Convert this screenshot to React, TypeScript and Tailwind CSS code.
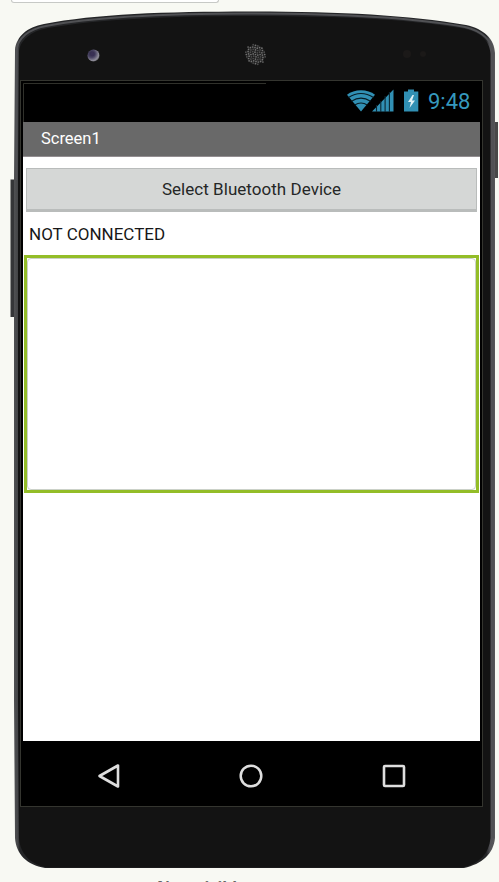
const speakerDots = Array.from({ length: 81 }, (_, i) => ({ x: (i % 9) - 4, y: Math.floor(i / 9) - 4 }))
  .filter(({ x, y }) => x * x + y * y < 20);

function PhoneShell() {
  return (
    <svg className="absolute left-0 top-0" width="499" height="882" viewBox="0 0 499 882" aria-hidden="true">
      <defs>
        <linearGradient id="edge" x1="14" x2="496" y1="0" y2="0" gradientUnits="userSpaceOnUse">
          <stop offset="0" stopColor="#505153" />
          <stop offset=".008" stopColor="#444547" />
          <stop offset=".012" stopColor="#242527" />
          <stop offset=".98" stopColor="#242527" />
          <stop offset=".987" stopColor="#505054" />
          <stop offset="1" stopColor="#58585a" />
        </linearGradient>
        <radialGradient id="lens" cx=".35" cy=".35" r=".8">
          <stop offset="0" stopColor="#29243f" />
          <stop offset=".4" stopColor="#4a4464" />
          <stop offset=".75" stopColor="#918f9a" />
          <stop offset="1" stopColor="#1e1e20" />
        </radialGradient>
      </defs>
      <path d="M10.500 179.500H15V317H10.500Z" fill="#353638" />
      <path d="M495 122H498V178H495Z" fill="#484848" />
      <path d="M14 300V179L15 50C16 37 27 27 44 24C95 14 165 11.500 250 11.500C340 11.500 407 15 466 25C484 29 494.500 39 495 53V838C493.500 854 482 864 464 868H45C27 865 16 854 15 838L14 700Z" fill="url(#edge)" />
      <path d="M16.500 180V51C17.500 38 29 29 46 26C95 16.500 165 13.500 250 13.500C340 13.500 410 17 465 27C482 31 493 41 493 54V838" fill="none" stroke="#505154" strokeWidth="2" />
      <path d="M18 180L19 52C20 40 31 31 48 28C100 19 170 16 250 16C340 16 405 19 461 28C480 31 490 41 490.500 54V838C489 854 479 864 462 867.500H48C31 865 20 854 19 838L18 700Z" fill="#131313" />
      <rect x="20.500" y="80.500" width="462" height="726" fill="#000" stroke="#34352f" />
      <path d="M23.500 122V83.500H266" fill="none" stroke="#30312b" />
      <circle cx="93.500" cy="55.500" r="6" fill="url(#lens)" />
      <circle cx="92.500" cy="54" r="2.300" fill="#393054" />
      <circle cx="255.500" cy="54.500" r="10" fill="#1e1e1e" />
      {speakerDots.map(({ x, y }) => (
        <circle key={`${x}/${y}`} cx={255.5 + x * 2.3 + (y % 2) * 0.5} cy={54.5 + y * 2.3 + (x % 2) * 0.6} r=".85" fill={(x * y) % 3 ? "#4c4c4c" : "#707070"} />
      ))}
      <circle cx="407" cy="54" r="4" fill="#1b1918" />
      <circle cx="423" cy="54" r="3" fill="#1b1918" />
    </svg>
  );
}

function StatusIcons() {
  return (
    <svg width="73" height="24" viewBox="347 89 73 24" fill="none" aria-hidden="true">
      <path d="M347 94.800C354 88.800 368 88.800 375 94.800L361 111.500Z" fill="#3190b4" />
      <path d="M348.500 97.500Q361 89.500 373.500 97.500M351.500 101.200Q361 95 370.500 101.200M354.700 105Q361 101 367.300 105" stroke="#071c25" strokeWidth="1.100" />
      <path d="M372 111.500L393.500 89.500V111.500Z" fill="#3190b4" />
      <path d="M376.500 105V112M380.800 101V112M385.100 96V112M389.400 92V112" stroke="#0b2733" strokeWidth="1.100" />
      <path d="M404 91.500H408V89.500H414V91.500H418.300V111.500H404Z" fill="#3190b4" />
      <path d="M412.500 95L408 102H411L409.500 108L415 100.500H412L414 95Z" fill="#e0f1f6" />
    </svg>
  );
}

export default function App() {
  return (
    <main className="relative flex h-[882px] w-[499px] flex-col overflow-hidden bg-[#f8f9f3] font-['Roboto','Liberation_Sans',sans-serif]">
      <PhoneShell />
      <div className="relative ml-[11px] h-[3px] w-[208px] shrink-0 rounded-b-[4px] border-x border-b border-[#c7c9c6] bg-white" />
      <section className="relative ml-[23px] mt-20 flex h-[723px] w-[457px] shrink-0 flex-col">
        <header className="flex h-[39px] shrink-0 items-center justify-end pb-[3px] pr-[9px]">
          <StatusIcons />
          <time className="ml-2 w-[43px] whitespace-nowrap pt-px text-[22px] leading-6 text-[#3598bd]">9:48</time>
        </header>
        <div className="flex h-[35px] shrink-0 items-center border-b border-[#938e91] bg-[#696969] pl-[18px] text-[16.500px] text-white">Screen1</div>
        <div className="flex h-[584px] shrink-0 flex-col bg-white pt-[11px]">
          <button className="ml-[3px] h-[44px] w-[451px] shrink-0 border border-b-[3px] border-[#b9bcbb] bg-[#d5d7d6] pt-px text-[17px] tracking-[.04px] text-[#252727]">Select Bluetooth Device</button>
          <div className="flex h-[43px] shrink-0 items-center pl-[6px] pt-[3px] text-[17px] text-[#171717]">NOT CONNECTED</div>
          <div className="ml-px h-[238px] w-[455px] shrink-0 border-[3px] border-[#93bd27] bg-white">
            <div className="h-full rounded-[4px] border border-[#cbd1c8]" />
          </div>
        </div>
        <nav className="grid h-[65px] shrink-0 grid-cols-3 items-center justify-items-center px-[15px] pt-1">
          <svg width="24" height="26" viewBox="0 0 24 26" aria-label="Back"><path d="M2.500 13L21 2.500V23.500Z" fill="none" stroke="#dedede" strokeWidth="2.600" strokeLinejoin="round" /></svg>
          <svg width="24" height="24" viewBox="0 0 24 24" aria-label="Home"><circle cx="12" cy="12" r="10.300" fill="none" stroke="#dedede" strokeWidth="2.500" /></svg>
          <svg width="24" height="24" viewBox="0 0 24 24" aria-label="Recent apps"><rect x="2" y="2" width="20" height="20" rx="1" fill="none" stroke="#dedede" strokeWidth="2.600" /></svg>
        </nav>
      </section>
      <p className="relative mt-[69px] shrink-0 pl-[8px] text-center font-['Noto_Sans',sans-serif] text-base font-bold leading-6 text-[#666]">Non-visible components</p>
    </main>
  );
}
